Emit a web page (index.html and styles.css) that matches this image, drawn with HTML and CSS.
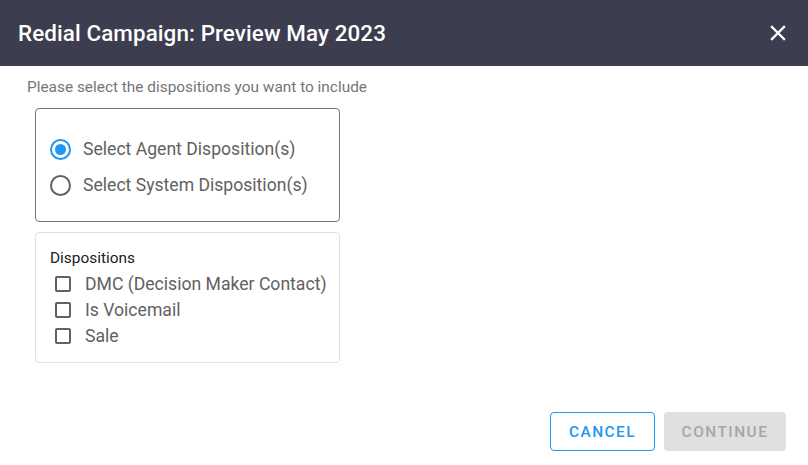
FILE: index.html
```html
<!DOCTYPE html>
<html>
<head>
<meta charset="utf-8">
<link rel="stylesheet" href="styles.css">
</head>
<body>
<div class="dialog">
  <header class="header">
    <h1 class="title">Redial Campaign: Preview May 2023</h1>
    <button class="close" aria-label="Close">
      <svg width="16" height="16" viewBox="0 0 16 16"><path d="M2 2 L14 14 M14 2 L2 14" stroke="#fff" stroke-width="2.4" stroke-linecap="square"/></svg>
    </button>
  </header>
  <div class="body">
    <p class="hint">Please select the dispositions you want to include</p>
    <div class="box radios">
      <label class="radio-row"><span class="radio checked"></span><span>Select Agent Disposition(s)</span></label>
      <label class="radio-row"><span class="radio"></span><span>Select System Disposition(s)</span></label>
    </div>
    <div class="box list">
      <div class="list-title">Dispositions</div>
      <label class="check-row"><span class="check"></span><span>DMC (Decision Maker Contact)</span></label>
      <label class="check-row"><span class="check"></span><span>Is Voicemail</span></label>
      <label class="check-row"><span class="check"></span><span>Sale</span></label>
    </div>
  </div>
  <footer class="footer">
    <button class="btn btn-outline">CANCEL</button>
    <button class="btn btn-disabled">CONTINUE</button>
  </footer>
</div>
</body>
</html>
```
FILE: styles.css
```css
* { box-sizing: border-box; }
html, body { margin: 0; padding: 0; background: #fff; }
body { font-family: Roboto, "Noto Sans", sans-serif; width: 808px; height: 465px; overflow: hidden; }
.dialog { display: flex; flex-direction: column; height: 465px; }
.header {
  height: 66px; background: #3c3d4f; display: flex; align-items: center;
  justify-content: space-between; padding: 0 22px 0 18px;
}
.title { margin: 0; color: #fff; font-size: 22.4px; font-weight: 500; letter-spacing: 0.1px; }
.close { background: none; border: 0; padding: 0; width: 16px; height: 16px; display: flex; }
.body { padding: 12px 0 0 35px; flex: 1; }
.hint { margin: 0 0 12px -8px; font-size: 15.4px; color: #757575; line-height: 18px; }
.box { width: 305px; border-radius: 4px; }
.radios { border: 1px solid #757575; height: 114px; padding: 29px 0 0 14px; display: flex; flex-direction: column; gap: 14px; }
.radio-row { display: flex; align-items: center; gap: 12px; font-size: 17.6px; color: #616161; height: 22px; }
.radio { width: 21px; height: 21px; border-radius: 50%; border: 2px solid #616161; display: flex; align-items: center; justify-content: center; }
.radio.checked { border-color: #2196f3; }
.radio.checked::after { content: ""; width: 11px; height: 11px; border-radius: 50%; background: #2196f3; }
.list { margin-top: 10px; border: 1px solid #e0e0e0; height: 131px; padding: 16px 0 0 14px; }
.list-title { font-size: 15.4px; color: #212121; line-height: 18px; margin-bottom: 4px; }
.check-row { display: flex; align-items: center; gap: 14px; font-size: 17.6px; color: #616161; height: 26px; padding-left: 5px; }
.check { width: 16px; height: 16px; border: 2px solid #616161; border-radius: 2px; }
.footer { display: flex; justify-content: flex-end; gap: 9px; padding: 0 22px 14px 0; }
.btn {
  height: 39px; font-family: Roboto, sans-serif; font-size: 15.4px; font-weight: 500; letter-spacing: 1.5px;
  border-radius: 4px; background: none; padding: 0;
}
.btn-outline { width: 105px; border: 1px solid #2196f3; color: #2196f3; background: #fff; }
.btn-disabled { width: 122px; border: 0; background: #e0e0e0; color: #a6a6a6; }
```
